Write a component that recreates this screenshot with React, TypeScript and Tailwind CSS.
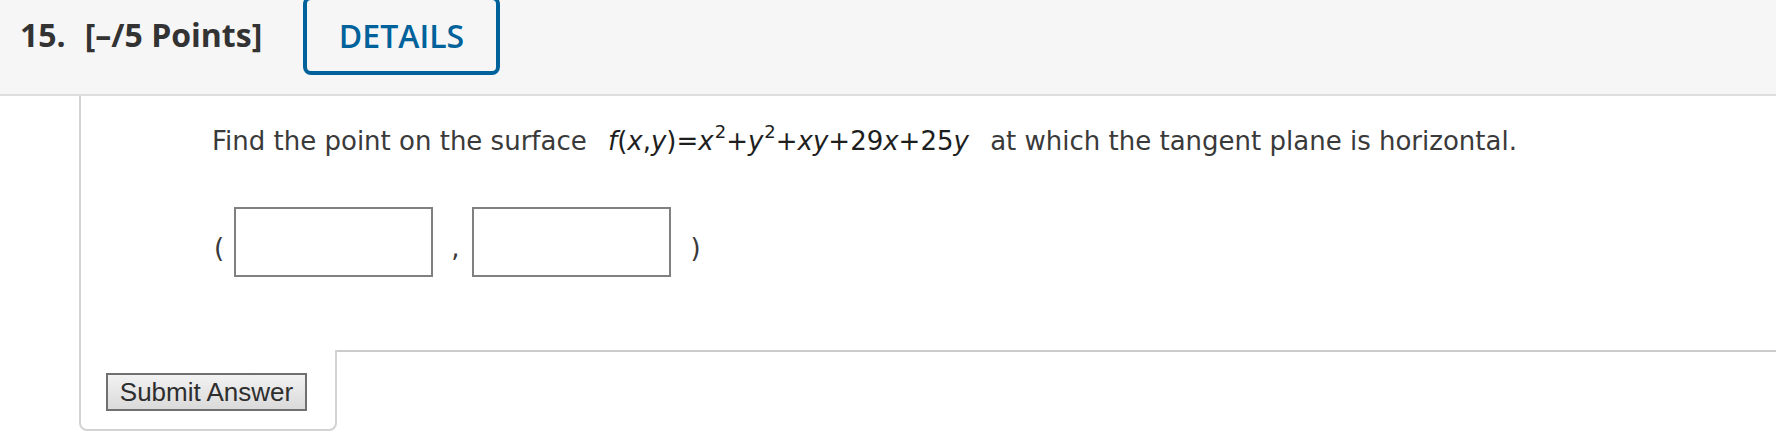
export default function App() {
  return (
    <div className="w-[1776px] h-[442px] overflow-hidden bg-white">
      {/* question header */}
      <header className="h-[96px] bg-[#f6f6f6] border-b-2 border-[#dedede] flex items-start">
        <div className="w-[303px] shrink-0 pl-[20px] mt-[19px] flex items-baseline leading-none text-[#333] font-bold font-['Open_Sans',sans-serif] text-[32px] whitespace-nowrap">
          <span>15.</span>
          <span className="ml-[19px]">[–/5 Points]</span>
        </div>
        <button className="-mt-[4px] w-[197px] h-[79px] border-4 border-[#00629b] rounded-[8px] flex items-center justify-center text-[32px] font-semibold text-[#00629b] font-['Open_Sans',sans-serif] leading-none">
          DETAILS
        </button>
      </header>

      {/* question body */}
      <div className="ml-[79px] h-[254px] border-l-2 border-[#d3d3d3] pt-[26px] pl-[131px] font-['DejaVu_Sans',Verdana,sans-serif]">
        <p className="text-[26px] leading-[39px] text-[#3a3a3a] whitespace-nowrap">
          Find the point on the surface{" "}
          <span className="ml-[13px] mr-[13px] text-[#1e1e1e]">
            <i>f</i>(<i>x</i>,<i>y</i>)=<i>x</i>
            <sup className="text-[18px] -top-[12px] ml-[1px]">2</sup>+<i>y</i>
            <sup className="text-[18px] -top-[12px] ml-[1px]">2</sup>+<i>x</i>
            <i>y</i>+29<i>x</i>+25<i>y</i>
          </span>{" "}
          at which the tangent plane is horizontal.
        </p>

        <div className="mt-[46px] flex items-start text-[26px] leading-none text-[#3a3a3a]">
          <span className="mt-[28px] ml-[2px]">(</span>
          <input
            type="text"
            aria-label="x"
            className="ml-[10px] w-[199px] h-[70px] border-2 border-[#808080] bg-white outline-none"
          />
          <span className="mt-[28px] ml-[18px]">,</span>
          <input
            type="text"
            aria-label="y"
            className="ml-[13px] w-[199px] h-[70px] border-2 border-[#808080] bg-white outline-none"
          />
          <span className="mt-[28px] ml-[19px]">)</span>
        </div>
      </div>

      {/* submit row */}
      <div className="flex">
        <div className="ml-[79px] w-[258px] h-[81px] shrink-0 border-l-2 border-r-2 border-b-2 border-[#d3d3d3] rounded-b-[8px] pt-[23px] pl-[25px]">
          <button className="w-[201px] h-[38px] border-2 border-[#707070] bg-gradient-to-b from-[#f2f2f2] to-[#dadada] text-[26px] leading-none text-[#2e2e2e] font-['Liberation_Sans',Arial,sans-serif]">
            Submit Answer
          </button>
        </div>
        <div className="flex-1 border-t-2 border-[#cccccc]" />
      </div>
    </div>
  );
}
